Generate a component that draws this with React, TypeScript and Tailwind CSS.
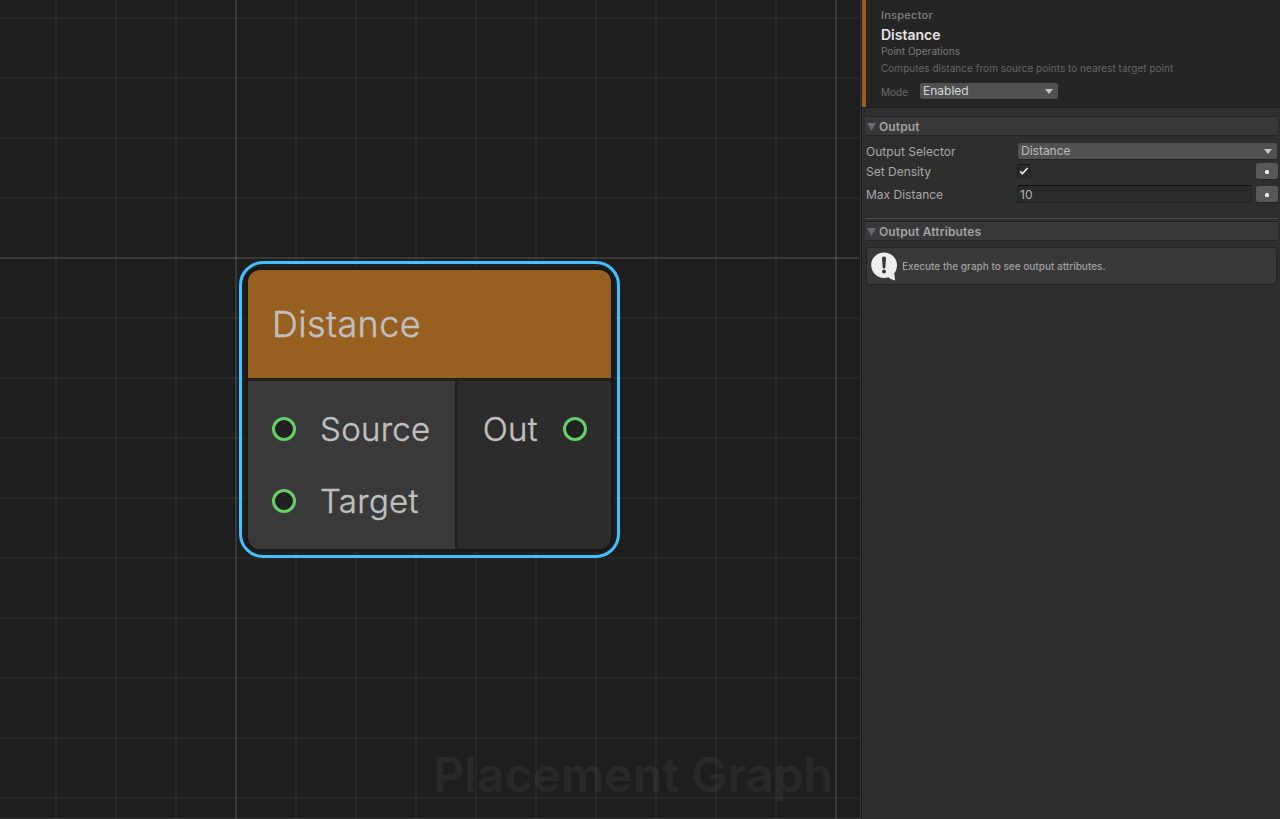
import React from 'react';

const CANVAS = { width: 860, height: 818 };
const minorX = Array.from({ length: 15 }, (_, i) => 56 + (i - 1) * 60).filter((x) => x > 0);
const minorY = Array.from({ length: 14 }, (_, i) => 18 + i * 60);

function Grid() {
  return (
    <svg className="absolute inset-0" width={CANVAS.width} height={CANVAS.height}>
      {minorX.map((x) => (
        <rect key={x} x={x - 1} y={0} width={2} height={CANVAS.height} fill="#fff" fillOpacity={(x - 236) % 600 === 0 ? 0.12 : 0.045} />
      ))}
      {minorY.map((y) => (
        <rect key={y} x={0} y={y - 1} width={CANVAS.width - 1} height={2} fill="#fff" fillOpacity={y === 258 ? 0.12 : 0.045} />
      ))}
    </svg>
  );
}

function Pin() {
  return <span className="size-6 shrink-0 rounded-full border-3 border-[#67cf67] bg-[#212121]" />;
}

function GraphNode() {
  return (
    <div className="absolute left-[239px] top-[261px] h-[297px] w-[381px] rounded-[24px] border-3 border-[#44c0ff] p-[3px]">
      <div className="flex h-full flex-col overflow-hidden rounded-[15px] border-3 border-[#191919] font-light text-[#c0c0c0] [-webkit-text-stroke:0.4px_#c0c0c0]">
        <div className="flex h-[108px] shrink-0 items-center bg-[#976020] pl-[24px] text-[36px] tracking-[0.4px]">
          Distance
        </div>
        <div className="h-[3px] shrink-0 bg-[#222222]" />
        <div className="flex flex-1 text-[33px] tracking-[0.3px]">
          <div className="w-[207px] bg-[#3c3c3c]/90 pl-6 pt-3">
            {['Source', 'Target'].map((name) => (
              <div key={name} className="flex h-[72px] items-center gap-6">
                <Pin />
                <span className="pt-0.5">{name}</span>
              </div>
            ))}
          </div>
          <div className="w-[3px] bg-[#222222]" />
          <div className="flex-1 bg-[#2d2d2d]/90 pr-6 pt-3">
            <div className="flex h-[72px] items-center justify-end gap-[25px]">
              <span className="pt-0.5">Out</span>
              <Pin />
            </div>
          </div>
        </div>
      </div>
    </div>
  );
}

function Dropdown({ value, className }: { value: string; className: string }) {
  return (
    <div
      className={`flex h-4 items-center justify-between rounded-[2px] bg-[#515151] pl-[3px] pr-[5px] text-[12px] leading-4 shadow-[0_1px_0_#242424] ${className}`}
    >
      <span>{value}</span>
      <svg width="8" height="5" viewBox="0 0 8 5">
        <path d="M0 0h8L4 5z" fill="#c4c4c4" />
      </svg>
    </div>
  );
}

function SectionHeader({ title }: { title: string }) {
  return (
    <div className="ml-[3px] mr-[2px] flex h-5 items-center border-y border-[#242424] bg-[#383838] pl-[2px] text-[12px] font-semibold text-[#a2a2a2]">
      <svg width="9" height="8" viewBox="0 0 9 8" className="mr-[3px] mt-0.5">
        <path d="M0 0h9L4.5 8z" fill="#6a6a6a" />
      </svg>
      <span className="pt-px leading-[17px] tracking-[0.12px]">{title}</span>
    </div>
  );
}

function PinButton() {
  return (
    <div className="flex h-4 w-[22px] items-center justify-center rounded-[2px] bg-[#585858] shadow-[0_1px_0_#242424]">
      <span className="mt-px size-[4px] rounded-[1.5px] bg-[#eeeeee]" />
    </div>
  );
}

function InspectorHeader() {
  return (
    <div className="h-[108px] border-b border-[#1a1a1a] bg-[#252525]">
      <div className="flex h-[107px] flex-col border-l-4 border-[#976020] pl-[15px]">
        <div className="mt-[7px] h-4 text-[11px] font-medium leading-4 tracking-[0.25px] text-[#808080]">Inspector</div>
        <div className="mt-[3px] h-[18px] text-[14px] font-semibold leading-[18px] text-[#e4e4e4]">Distance</div>
        <div className="h-[14px] text-[10px] leading-[14px] tracking-[0.03px] text-[#787878]">Point Operations</div>
        <div className="mt-[3px] h-[14px] text-[10px] leading-[14px] tracking-[0.03px] text-[#666666]">
          Computes distance from source points to nearest target point
        </div>
        <div className="mt-2 flex h-4 items-center">
          <span className="w-[39px] pt-px text-[10px] leading-4 tracking-[0.03px] text-[#6a6a6a]">Mode</span>
          <Dropdown value="Enabled" className="w-[138px] text-[#d6d6d6]" />
        </div>
      </div>
    </div>
  );
}

function Inspector() {
  return (
    <aside className="flex h-full w-[418px] flex-col bg-[#2e2e2e] text-[#a8a8a8]">
      <InspectorHeader />
      <div className="mt-2">
        <SectionHeader title="Output" />
      </div>
      <div className="mt-[7px] flex h-4 items-center pl-1 pr-[3px] text-[12px]">
        <span className="w-[152px] pt-0.5 tracking-[0.05px]">Output Selector</span>
        <Dropdown value="Distance" className="flex-1 text-[#bcbcbc]" />
      </div>
      <div className="mt-1 flex h-4 items-center pl-1 pr-[2px] text-[12px]">
        <span className="w-[151px] pt-0.5">Set Density</span>
        <span className="flex size-[14px] items-center justify-center rounded-[2px] border border-[#202020] border-t-[#121212] bg-[#2a2a2a]">
          <svg width="10" height="8" viewBox="0 0 10 8">
            <path d="M1.2 4.4l2.3 2.2L8.6 1" fill="none" stroke="#eeeeee" strokeWidth="1.6" />
          </svg>
        </span>
        <span className="flex-1" />
        <PinButton />
      </div>
      <div className="mt-[6px] flex h-[18px] items-center pl-1 pr-[2px] text-[12px]">
        <span className="w-[151px] pt-0.5">Max Distance</span>
        <div className="mr-1 h-[18px] flex-1 rounded-[2px] border border-[#222222] border-t-[#121212] bg-[#2a2a2a] pl-[2px] leading-[18px] text-[#b4b4b4]">
          10
        </div>
        <PinButton />
      </div>
      <div className="ml-[3px] mr-[2px] mt-[15px] h-px bg-[#4c4c4c]" />
      <div className="mt-[2px]">
        <SectionHeader title="Output Attributes" />
      </div>
      <div className="ml-1 mr-[3px] mt-[6px] flex h-[38px] items-center rounded-[3px] border border-[#232323] bg-[#383838] pl-1">
        <svg width="27" height="29" viewBox="0 0 27 29" className="mr-1">
          <path
            d="M13 0.5C5.8 0.5 0.2 6 0.2 13S5.8 26 13 26c1.5 0 3-.3 4.4-.8 2 1.7 4.4 2.8 6.7 3.2L23.3 21.2C25 19 26 16.1 26 13 26 6 20.2.5 13 .5z"
            fill="#eeeeee"
          />
          <path d="M13 4.4c1.3 0 2.1.8 2 2l-.7 9c-.1 1.5-2.5 1.5-2.6 0l-.7-9c-.1-1.2.7-2 2-2z" fill="#383838" />
          <circle cx="13" cy="19.5" r="1.9" fill="#383838" />
        </svg>
        <span className="text-[10px] font-medium text-[#a0a0a0]">Execute the graph to see output attributes.</span>
      </div>
    </aside>
  );
}

export default function App() {
  return (
    <div className="flex h-[819px] w-[1280px] overflow-hidden bg-[#1a1a1a] font-['Inter','Liberation_Sans',sans-serif]">
      <main className="relative mr-px h-full w-[861px] overflow-hidden border-b border-r border-[#353535] bg-[#1e1e1e]">
        <Grid />
        <div className="absolute bottom-[7px] right-[27px] whitespace-nowrap text-[48px] font-semibold leading-[72px] tracking-[0.05px] text-white/[0.05]">
          Placement Graph
        </div>
        <GraphNode />
      </main>
      <Inspector />
    </div>
  );
}
